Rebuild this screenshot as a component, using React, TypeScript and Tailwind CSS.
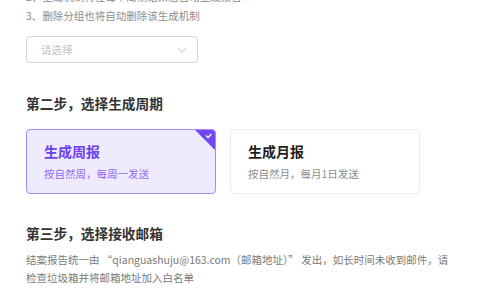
import React, { useState } from 'react'

const font = "font-['Noto_Sans_CJK_SC','Noto_Sans',sans-serif]"

const cycles = [
  { key: 'week', title: '生成周报', desc: '按自然周，每周一发送' },
  { key: 'month', title: '生成月报', desc: '按自然月，每月1日发送' },
]

const App = () => {
  const [cycle, setCycle] = useState('week')

  return (
    <div className={`w-[480px] h-[300px] overflow-hidden bg-white ${font}`}>
      <div className="px-[26px] -mt-[13px]">
        <div className="text-[10.5px] leading-[19px] text-[#8c8c8c]">
          <p>2、生成机制将在每个周期结束后自动生成报告</p>
          <p>3、删除分组也将自动删除该生成机制</p>
        </div>

        <button
          type="button"
          className="mt-[11px] flex h-[27px] w-[172px] items-center justify-between rounded-[4px] border border-[#d9d9d9] pl-[14px] pr-[9px] text-[10.5px] text-[#bfbfbf]"
        >
          <span>请选择</span>
          <svg width="12" height="12" viewBox="0 0 12 12" fill="none">
            <path d="M2 4.5 6 8.3 10 4.5" stroke="#c4c4c4" strokeWidth="1" />
          </svg>
        </button>

        <h3 className="mt-[30px] text-[13.7px] leading-[20px] font-bold text-[#333]">
          第二步，选择生成周期
        </h3>

        <div className="mt-[16px] flex gap-[14px]">
          {cycles.map((c) => {
            const active = cycle === c.key
            return (
              <div
                key={c.key}
                onClick={() => setCycle(c.key)}
                className={`relative h-[65px] w-[190px] cursor-pointer overflow-hidden rounded-[4px] border pl-[17px] pt-[11px] ${
                  active
                    ? 'border-[#a68af7] bg-[#efebfe]'
                    : 'border-[#ececec] bg-white'
                }`}
              >
                <div
                  className={`text-[14px] leading-[20px] font-bold ${
                    active ? 'text-[#6b40f0]' : 'text-[#1f1f1f]'
                  }`}
                >
                  {c.title}
                </div>
                <div
                  className={`mt-[5px] text-[10.5px] leading-[16px] ${
                    active ? 'text-[#8d6cf3]' : 'text-[#8c8c8c]'
                  }`}
                >
                  {c.desc}
                </div>
                {active && (
                  <div className="absolute right-0 top-0 h-[20px] w-[20px]">
                    <svg width="20" height="20" viewBox="0 0 20 20">
                      <path d="M0 0H20V20Z" fill="#7446f3" />
                      <path
                        d="M11 5.5 13 7.5 16.5 4"
                        stroke="#fff"
                        strokeWidth="1.3"
                        fill="none"
                      />
                    </svg>
                  </div>
                )}
              </div>
            )
          })}
        </div>

        <h3 className="mt-[29px] text-[13.7px] leading-[20px] font-bold text-[#333]">
          第三步，选择接收邮箱
        </h3>

        <p className="mt-[8px] w-[428px] text-[10.5px] leading-[18px] text-[#7a7a7a]">
          结案报告统一由 “qianguashuju@163.com（邮箱地址）” 发出，如长时间未收到邮件，请检查垃圾箱并将邮箱地址加入白名单
        </p>
      </div>
    </div>
  )
}

export default App
